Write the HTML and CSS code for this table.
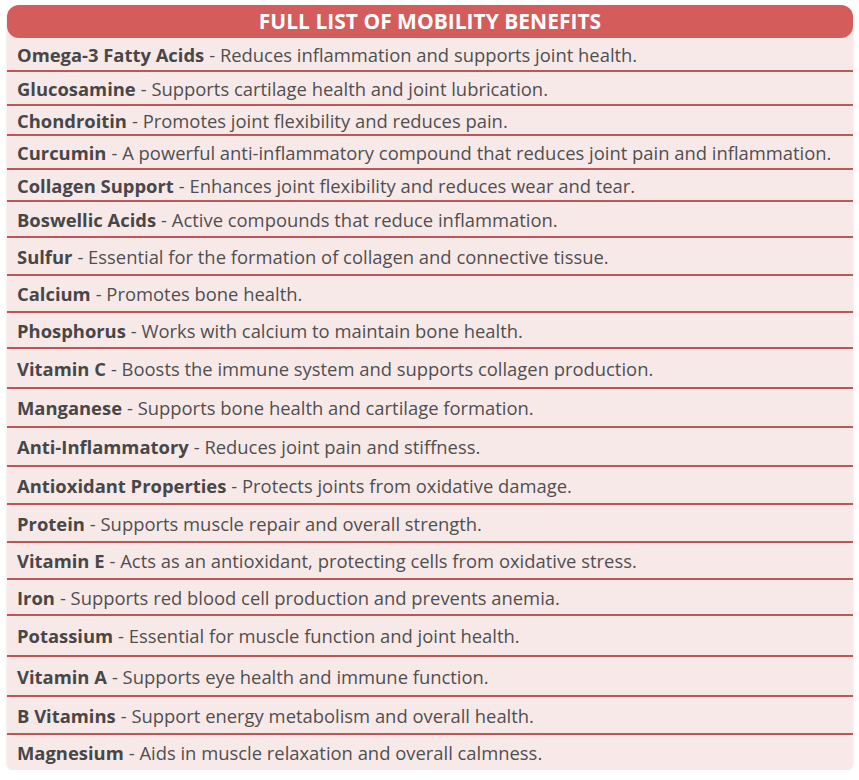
FILE: index.html
```html
<!DOCTYPE html>
<html lang="en">
<head>
<meta charset="utf-8">
<title>Full List of Mobility Benefits</title>
<link rel="stylesheet" href="styles.css">
</head>
<body>
<div class="card">
  <div class="header">FULL LIST OF MOBILITY BENEFITS</div>
  <ul class="list">
    <li class="row"><b>Omega-3 Fatty Acids</b> - Reduces inflammation and supports joint health.</li>
    <li class="row"><b>Glucosamine</b> - Supports cartilage health and joint lubrication.</li>
    <li class="row"><b>Chondroitin</b> - Promotes joint flexibility and reduces pain.</li>
    <li class="row"><b>Curcumin</b> - A powerful anti-inflammatory compound that reduces joint pain and inflammation.</li>
    <li class="row"><b>Collagen Support</b> - Enhances joint flexibility and reduces wear and tear.</li>
    <li class="row"><b>Boswellic Acids</b> - Active compounds that reduce inflammation.</li>
    <li class="row"><b>Sulfur</b> - Essential for the formation of collagen and connective tissue.</li>
    <li class="row"><b>Calcium</b> - Promotes bone health.</li>
    <li class="row"><b>Phosphorus</b> - Works with calcium to maintain bone health.</li>
    <li class="row"><b>Vitamin C</b> - Boosts the immune system and supports collagen production.</li>
    <li class="row"><b>Manganese</b> - Supports bone health and cartilage formation.</li>
    <li class="row"><b>Anti-Inflammatory</b> - Reduces joint pain and stiffness.</li>
    <li class="row"><b>Antioxidant Properties</b> - Protects joints from oxidative damage.</li>
    <li class="row"><b>Protein</b> - Supports muscle repair and overall strength.</li>
    <li class="row"><b>Vitamin E</b> - Acts as an antioxidant, protecting cells from oxidative stress.</li>
    <li class="row"><b>Iron</b> - Supports red blood cell production and prevents anemia.</li>
    <li class="row"><b>Potassium</b> - Essential for muscle function and joint health.</li>
    <li class="row"><b>Vitamin A</b> - Supports eye health and immune function.</li>
    <li class="row"><b>B Vitamins</b> - Support energy metabolism and overall health.</li>
    <li class="row last"><b>Magnesium</b> - Aids in muscle relaxation and overall calmness.</li>
  </ul>
</div>
</body>
</html>
```
FILE: styles.css
```css
* { box-sizing: border-box; }
html, body { background: #ffffff; }
body {
  margin: 0;
  padding: 5px 6px 0 7px;
  font-family: "Open Sans", "Liberation Sans", sans-serif;
}
.card {
  width: 846px;
  background: #f8e9e9;
  border-radius: 12px 12px 8px 8px;
  box-shadow: 0 1px 3px rgba(120, 80, 80, 0.18);
}
.header {
  height: 33px;
  background: #d45c5b;
  border-radius: 12px;
  color: #ffffff;
  font-weight: 700;
  font-size: 21px;
  line-height: 33px;
  text-align: center;
}
.list {
  list-style: none;
  margin: 0;
  padding: 0;
  display: grid;
  grid-template-rows: 34px 34px 30px 34px 32px 36px 38px 37px 36px 40px 39px 39px 38px 38px 37px 36px 41px 40px 38px 35px;
}
.row {
  display: flex;
  align-items: center;
  padding: 0 10px;
  font-size: 18.4px;
  color: #4f4f4f;
  border-bottom: 2px solid #bb5759;
  white-space: nowrap;
}
.row b {
  font-weight: 700;
  color: #474747;
  margin-right: 5px;
}
.row.last { border-bottom: 0; }
```
